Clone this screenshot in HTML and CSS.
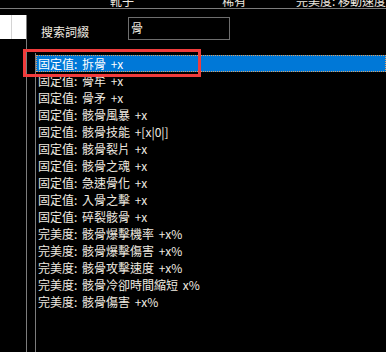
FILE: index.html
```html
<!DOCTYPE html>
<html lang="zh-Hant">
<head>
    <meta charset="UTF-8">
    <meta name="viewport" content="width=device-width, initial-scale=1.0">
    <title>搜索詞綴</title>
    <link rel="stylesheet" href="styles.css">
</head>
<body>

    <div class="topbar">
        <span class="col-type">靴子</span>
        <span class="col-rarity">稀有</span>
        <span class="col-affix">完美度: 移動速度</span>
    </div>

    <div class="main">
        <aside class="side">
            <div class="thumb"><div class="thumb-left"></div></div>
        </aside>

        <section class="content">
            <div class="search">
                <label class="search-label">搜索詞綴</label>
                <div class="search-box">骨</div>
            </div>

            <ul class="affix-list">
                <li class="selected">固定值: 拆骨 +x</li>
                <li>固定值: 骨牟 +x</li>
                <li>固定值: 骨矛 +x</li>
                <li>固定值: 骸骨風暴 +x</li>
                <li>固定值: 骸骨技能 +[x|0|]</li>
                <li>固定值: 骸骨裂片 +x</li>
                <li>固定值: 骸骨之魂 +x</li>
                <li>固定值: 急速骨化 +x</li>
                <li>固定值: 入骨之擊 +x</li>
                <li>固定值: 碎裂骸骨 +x</li>
                <li>完美度: 骸骨爆擊機率 +x%</li>
                <li>完美度: 骸骨爆擊傷害 +x%</li>
                <li>完美度: 骸骨攻擊速度 +x%</li>
                <li>完美度: 骸骨冷卻時間縮短 x%</li>
                <li>完美度: 骸骨傷害 +x%</li>
            </ul>
        </section>
    </div>

    <!-- marco rojo de resaltado -->
    <div class="highlight"></div>

</body>
</html>
```

FILE: styles.css
```css
body {
    margin: 0;
    padding: 0;
    background-color: #000000;
    color: #f0ebe0;
    font-family: "Noto Sans CJK TC", "Noto Sans", sans-serif;
    font-size: 12px;
    height: 352px;
    overflow: hidden;
    position: relative;
}

.topbar {
    height: 8px;
    border-bottom: 1px solid #7c7c7c;
    overflow: hidden;
    display: flex;
    line-height: 14px;
}

.topbar span {
    margin-top: -6px;
    white-space: nowrap;
}

.col-type {
    margin-left: 110px;
    width: 125px;
}

.col-rarity {
    width: 82px;
}

.main {
    display: flex;
    height: 343px;
}

.side {
    width: 26px;
    border-right: 1px solid #7c7c7c;
    margin-top: 6px;
}

.thumb {
    height: 24px;
    background-color: #ffffff;
}

.thumb-left {
    width: 11px;
    height: 24px;
    border-right: 1px solid #d4d4d4;
}

.content {
    flex: 1;
    display: flex;
    flex-direction: column;
}

.search {
    display: flex;
    margin-top: 8px;
    padding-left: 14px;
}

.search-label {
    width: 87px;
    margin-top: 8px;
    line-height: 14px;
}

.search-box {
    width: 98px;
    height: 18px;
    border: 1px solid #6e6e6e;
    padding: 3px 0 0 2px;
    line-height: 14px;
}

.affix-list {
    list-style: none;
    margin: 13px 0 0 8px;
    padding: 2px 0 0 0;
    flex: 1;
    border-left: 1px solid #7c7c7c;
}

.affix-list li {
    height: 17px;
    line-height: 17px;
    padding-left: 2px;
    white-space: nowrap;
    word-spacing: 2px;
}

.affix-list li.selected {
    background-color: #0078d7;
    border: 1px dotted #e0a060;
    box-sizing: border-box;
    line-height: 15px;
    padding-left: 1px;
    color: #ffffff;
}

.highlight {
    position: absolute;
    left: 23px;
    top: 49px;
    width: 178px;
    height: 28px;
    border: 3px solid #f03c3c;
    box-sizing: border-box;
}
```
